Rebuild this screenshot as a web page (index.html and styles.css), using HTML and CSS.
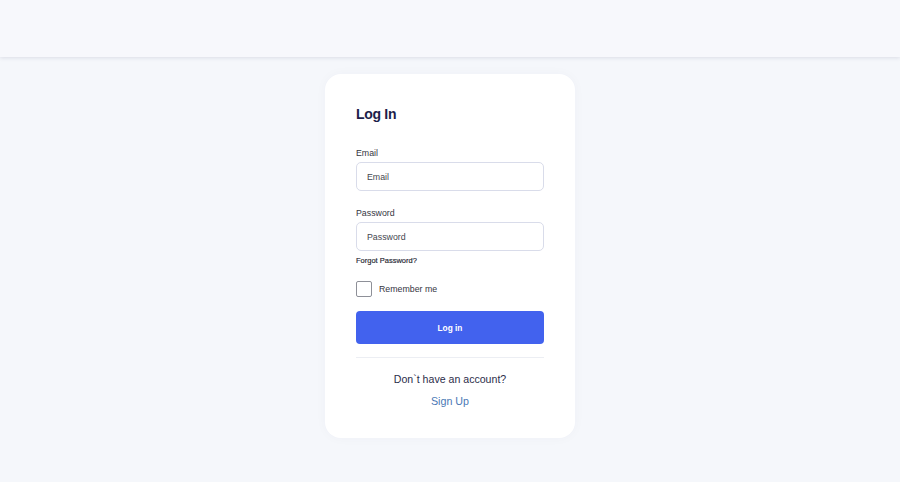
FILE: index.html
```html
<!DOCTYPE html>
<html lang="en">
<head>
<meta charset="utf-8">
<title>Log In</title>
<link rel="stylesheet" href="styles.css">
</head>
<body>
<header class="topbar"></header>
<main class="page">
  <form class="card">
    <h1 class="title">Log In</h1>
    <label class="label" for="email">Email</label>
    <input class="input" id="email" type="text" placeholder="Email">
    <label class="label label-gap" for="pw">Password</label>
    <input class="input" id="pw" type="password" placeholder="Password">
    <a class="forgot" href="#">Forgot Password?</a>
    <label class="remember"><span class="box"></span><span>Remember me</span></label>
    <button class="btn" type="button">Log in</button>
    <hr class="divider">
    <p class="noacc">Don`t have an account?</p>
    <a class="signup" href="#">Sign Up</a>
  </form>
</main>
</body>
</html>
```

FILE: styles.css
```css
* { box-sizing: border-box; }
html, body { margin: 0; padding: 0; }
body {
  background: #f5f7fb;
  font-family: "Liberation Sans", Arial, sans-serif;
  color: #2b2d42;
  height: 482px;
  overflow: hidden;
}
.topbar {
  height: 57px;
  background: #f7f8fc;
  box-shadow: 0 1px 4px rgba(30, 40, 80, 0.12);
  position: relative;
}
.page {
  display: flex;
  justify-content: center;
  padding-top: 17px;
}
.card {
  width: 250px;
  background: #ffffff;
  border-radius: 16px;
  padding: 30px 31px 30px 31px;
  display: flex;
  flex-direction: column;
  box-shadow: 0 0 12px rgba(40, 50, 90, 0.03);
}
.title {
  margin: 0 0 23px 0;
  font-size: 14px;
  line-height: 20px;
  font-weight: 700;
  letter-spacing: -0.3px;
  color: #1d1e4a;
}
.label {
  font-size: 8.8px;
  line-height: 13px;
  color: #35363f;
  margin-bottom: 2px;
}
.label-gap { margin-top: 16px; }
.input {
  height: 29px;
  width: 100%;
  border: 1px solid #d9dcea;
  border-radius: 5px;
  padding: 0 10px;
  font-family: inherit;
  font-size: 8.8px;
  color: #333;
  background: #fff;
  outline: none;
}
.input::placeholder { color: #45474f; }
.forgot {
  margin-top: 5px;
  font-size: 7.5px;
  line-height: 10px;
  color: #22242f;
  text-decoration: none;
  -webkit-text-stroke: 0.15px #22242f;
}
.remember {
  margin-top: 15px;
  display: flex;
  align-items: center;
  gap: 7px;
  font-size: 8.8px;
  color: #35363f;
}
.box {
  width: 16px;
  height: 16px;
  border: 1px solid #8e9098;
  border-radius: 2px;
  background: #fff;
}
.btn {
  margin-top: 14px;
  height: 33px;
  width: 100%;
  border: none;
  border-radius: 4px;
  background: #4262ee;
  color: #fff;
  font-family: inherit;
  font-size: 8.3px;
  font-weight: 700;
}
.divider {
  margin: 13px 0 0 0;
  border: none;
  border-top: 1px solid #eceef3;
  height: 0;
}
.noacc {
  margin: 14px 0 0 0;
  text-align: center;
  font-size: 10.6px;
  line-height: 14px;
  color: #2b2d4a;
}
.signup {
  margin-top: 8px;
  text-align: center;
  font-size: 10.7px;
  line-height: 14px;
  color: #4a78b5;
  text-decoration: none;
}
```
